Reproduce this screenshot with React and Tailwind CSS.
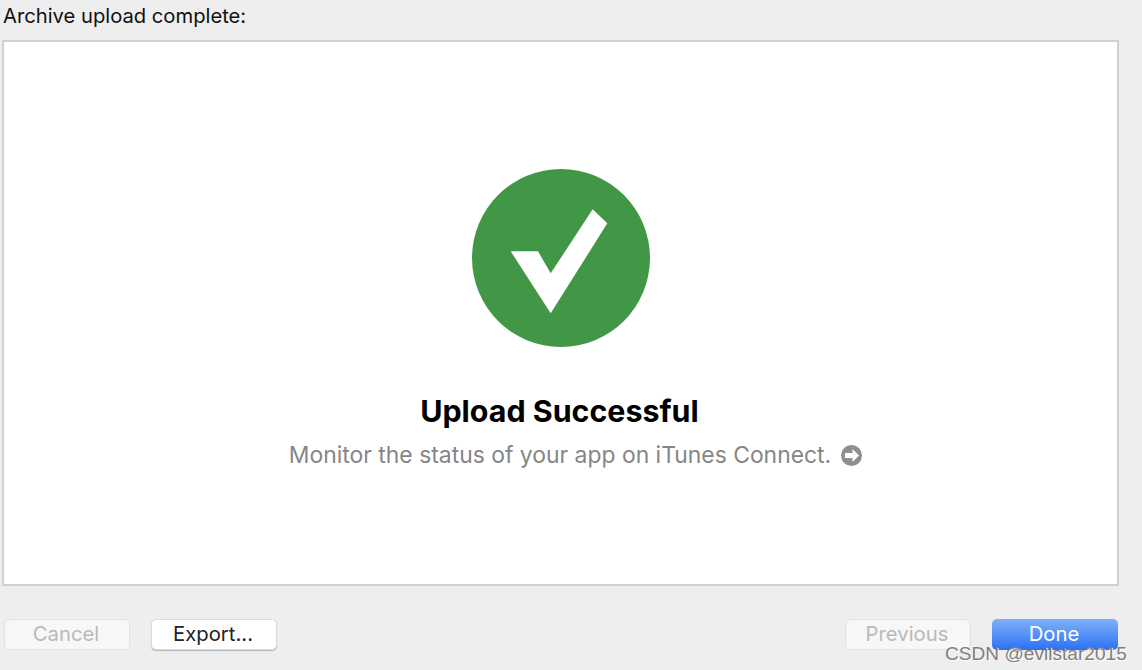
export default function App() {
  return (
    <div className="relative w-[1142px] h-[670px] overflow-hidden bg-[#eeeeee] font-['Inter','Liberation_Sans',sans-serif] flex flex-col">
      <div className="h-[40px] pl-[3px] pt-[4px] text-[20.2px] leading-[24px] text-[#111111]">Archive upload complete:</div>
      <div className="ml-[2px] w-[1117px] h-[546px] bg-white border-2 border-[#d0d0d0] flex flex-col items-center">
        <svg className="mt-[127px] ml-[1px] shrink-0" width="178" height="178" viewBox="0 0 178 178">
          <circle cx="89" cy="89" r="89" fill="#429747" />
          <path d="M38.7 82.3H66L78.7 104.3L120.7 40.3L135.3 54.3L78.7 144.3Z" fill="#ffffff" />
        </svg>
        <div className="mt-[45px] h-[38px] text-[30.4px] leading-[38px] font-bold text-black -ml-[2px]">Upload Successful</div>
        <div className="mt-[9px] h-[32px] flex items-center gap-[10px] text-[22.9px] leading-[32px] text-[#868686] ml-[30px]">
          <span>Monitor the status of your app on iTunes Connect.</span>
          <svg width="21" height="21" viewBox="0 0 21 21">
            <circle cx="10.5" cy="10.5" r="10.5" fill="#8f8f8f" />
            <path d="M4 8H11.5V4L18 10.5L11.5 17V13H4Z" fill="#ffffff" />
          </svg>
        </div>
      </div>
      <div className="mt-[33px] pl-[4px] w-[1118px] flex items-start">
        <div className="w-[126px] h-[31px] pr-[2px] rounded-[5px] bg-[#f7f7f7] border border-[#e2e2e2] text-[20.3px] leading-[27px] text-center text-[#b9b9b9]">Cancel</div>
        <div className="ml-[21px] w-[126px] h-[31px] pr-[2px] rounded-[5px] bg-white border border-[#dcdcdc] shadow-[0_1px_1px_rgba(0,0,0,0.25)] text-[20.3px] leading-[27px] text-center text-[#222222]">Export...</div>
        <div className="ml-auto w-[126px] h-[31px] pr-[2px] rounded-[5px] bg-[#f7f7f7] border border-[#e2e2e2] text-[20.3px] leading-[27px] text-center text-[#b9b9b9]">Previous</div>
        <div className="ml-[21px] w-[126px] h-[31px] pr-[2px] rounded-[5px] bg-gradient-to-b from-[#7fb0f8] to-[#2a70f4] text-[20.3px] leading-[29px] text-center text-white">Done</div>
      </div>
      <div className="absolute left-[945px] top-[643px] text-[19.1px] leading-[22px] font-['Liberation_Sans',sans-serif] text-[#808080] [text-shadow:1px_1px_0_rgba(255,255,255,0.8)] whitespace-nowrap">CSDN @evilstar2015</div>
    </div>
  );
}
